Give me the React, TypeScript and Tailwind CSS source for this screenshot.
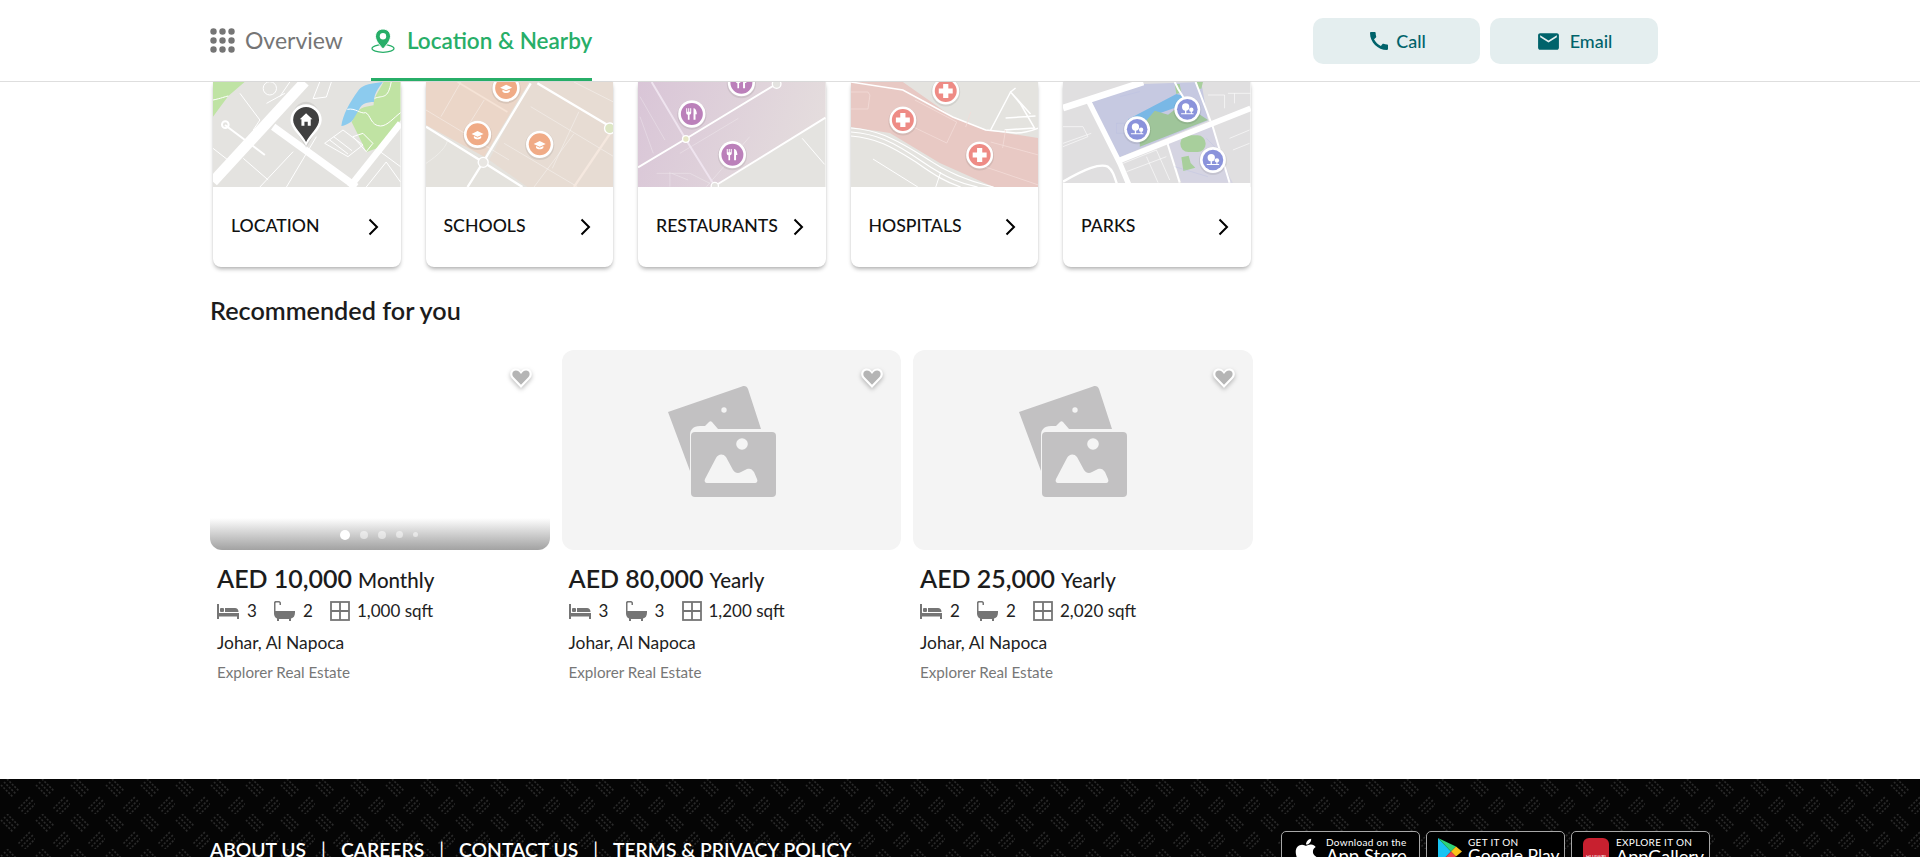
import { FaApple } from "react-icons/fa"

const phonePath = "M20.01 15.38c-1.23 0-2.42-.2-3.53-.56-.35-.12-.74-.03-1.01.24l-1.57 1.97c-2.83-1.35-5.48-3.9-6.89-6.83l1.95-1.66c.27-.28.35-.67.24-1.02-.37-1.11-.56-2.3-.56-3.53 0-.54-.45-.99-.99-.99H4.19C3.65 3 3 3.24 3 3.99 3 13.28 10.73 21 20.01 21c.71 0 .99-.63.99-1.18v-3.45c0-.54-.45-.99-.99-.99z"
const mailPath = "M20 4H4c-1.1 0-1.99.9-1.99 2L2 18c0 1.1.9 2 2 2h16c1.1 0 2-.9 2-2V6c0-1.1-.9-2-2-2zm0 4l-8 5-8-5V6l8 5 8-5v2z"

function GridIcon() {
    const spots = [3.5, 12.5, 21.5]
    return (
        <svg width="25" height="25" viewBox="0 0 25 25" fill="#757575">
            {spots.map((y) => spots.map((x) => <circle key={`${x}-${y}`} cx={x} cy={y} r="3.2" />))}
        </svg>
    )
}

function PinIcon() {
    return (
        <svg width="24" height="25" viewBox="0 0 24 25" fill="none">
            <ellipse cx="12" cy="20.5" rx="11" ry="3.8" stroke="#27ae68" strokeWidth="1.2" />
            <path d="M12 1C7.6 1 4.5 4.2 4.5 8.4 4.5 13 9.5 18 12 21c2.5-3 7.5-8 7.5-12.6C19.5 4.2 16.4 1 12 1z" fill="#27ae68" stroke="#fff" strokeWidth="1" />
            <circle cx="12" cy="8.2" r="3.2" fill="#fff" />
        </svg>
    )
}

function Chevron() {
    return (
        <svg width="11" height="18" viewBox="0 0 11 18" fill="none" className="shrink-0">
            <path d="M1.5 1.5 9 9l-7.5 7.5" stroke="#000" strokeWidth="2" />
        </svg>
    )
}

function CapGlyph({ x, y }: { x: number; y: number }) {
    return (
        <g transform={`translate(${x} ${y})`} fill="#fff">
            <path d="M0-12 18-3 0 5-18-3z" />
            <path d="M-11 3 0 8 11 3v6C6 14-6 14-11 9z" />
        </g>
    )
}

function PinDisc({ x, y, r, fill, children }: { x: number; y: number; r: number; fill: string; children?: React.ReactNode }) {
    return (
        <g>
            <circle cx={x} cy={y + 3} r={r + 3} fill="#000" opacity="0.08" />
            <circle cx={x} cy={y} r={r} fill="#fff" />
            <circle cx={x} cy={y} r={r - 8} fill={fill} />
            {children}
        </g>
    )
}

function LocationMap() {
    return (
        <svg viewBox="9 6 564 315" className="block w-full h-full" preserveAspectRatio="none">
            <rect x="9" y="6" width="564" height="315" fill="#e4e3e0" />
            <path d="M9 6h95L55 48 9 110z" fill="#bfe3a4" />
            <path d="M9 60c25-5 35-10 46-12" stroke="#fff" strokeWidth="3" fill="none" />
            <path d="M395 138c5-35 25-70 50-105 10-15 25-22 75-27-15 20-30 40-25 60-25 0-45 5-50 35-15 25-35 35-50 37z" fill="#8ccbee" />
            <path d="M522 6h51v115l-60 80-42 15-45-90 18-30c10-15 25-15 48-20 0-25 15-40 30-70z" fill="#c0e3a3" />
            <path d="M413 88c25-5 40 15 55 10 15 5 15 40 45 40 20 0 40-25 60-40M495 55c25-10 40 5 50-49" stroke="#fff" strokeWidth="3" fill="none" />
            <g stroke="#fff" fill="none" strokeLinecap="butt">
                <path d="M9 305 285 6" strokeWidth="32" />
                <path d="M190 140 440 321" strokeWidth="22" />
                <path d="M573 130 420 321" strokeWidth="20" />
                <path d="M45 135 165 225" strokeWidth="6" />
                <path d="M100 235 175 300M150 321 250 215M230 321 320 170M90 40 150 120 130 150M9 205l45 35M470 321l60-75 43 60M505 210l68 50" strokeWidth="3" />
                <circle cx="46" cy="134" r="10" strokeWidth="6" />
                <circle cx="180" cy="25" r="20" strokeWidth="3" />
                <path d="M170 70 225 40M240 6 210 50M330 6l-20 50 40-5 15-45" strokeWidth="3" />
                <path d="M345 190 400 150 460 195 415 230zM372 170l55 42M360 180l55 42" strokeWidth="3" />
                <path d="M430 170l30-10 30 30-20 25z" strokeWidth="3" />
            </g>
            <path d="M289 204 260 155c-30-40-5-90 29-90s59 50 29 90z" fill="#000" opacity="0.08" />
            <path d="M289 198c-10-25-47-50-47-78a47 47 0 0 1 94 0c0 28-37 53-47 78z" fill="#fff" />
            <path d="M289 186c-10-22-39-44-39-66a39 39 0 0 1 78 0c0 22-29 44-39 66z" fill="#404040" />
            <path d="M289 100 270 118h5v19h9v-12h10v12h9v-19h5z" fill="#fff" />
        </svg>
    )
}

function SchoolsMap() {
    return (
        <svg viewBox="705 246 564 315" className="block w-full h-full" preserveAspectRatio="none">
            <rect x="705" y="246" width="564" height="315" fill="#e4e2dd" />
            <path d="M705 246h310L880 470 705 375z" fill="#ebd6c8" />
            <path d="M1015 246h254v315H1010L895 480z" fill="#e7dcd3" />
            <g stroke="#fff" fill="none">
                <path d="M1020 250 878 485M878 485 830 561M705 380l170 105 120 76M1040 250l220 130" strokeWidth="7" />
                <path d="M705 330l250 150M810 246 750 350M880 300l-50 80M1020 320l250 150M1165 335l-80 170M1030 561l120-160M940 430l220 130M770 420c-5 30-50 60-65 70M1150 246l119 60" strokeWidth="1.5" opacity="0.75" />
                <path d="M1269 385 1150 561" stroke="#f5e8df" strokeWidth="7" />
                <path d="M800 246l150 90" stroke="#f5e3d6" strokeWidth="5" />
            </g>
            <circle cx="877" cy="487" r="15" fill="#e8e6e2" stroke="#fff" strokeWidth="4" />
            <circle cx="1258" cy="385" r="16" fill="#dde6c4" stroke="#fff" strokeWidth="4" />
            <PinDisc x={860} y={403} r={41} fill="#f0ab86"><CapGlyph x={860} y={405} /></PinDisc>
            <PinDisc x={1047} y={433} r={41} fill="#f0ab86"><CapGlyph x={1047} y={435} /></PinDisc>
            <PinDisc x={946} y={264} r={41} fill="#f0ab86"><CapGlyph x={946} y={266} /></PinDisc>
        </svg>
    )
}

function Cutlery({ x, y }: { x: number; y: number }) {
    return (
        <g transform={`translate(${x} ${y})`} fill="#fff">
            <path d="M-17-16h3v10h3v-10h3v10h3v-10h3v13c0 4-3 5-5 6v15h-5V3c-3-1-5-2-5-6z" />
            <path d="M5-16c6 0 10 8 10 18H11v16H5z" />
        </g>
    )
}

function RestaurantsMap() {
    return (
        <svg viewBox="-6 6 564 315" className="block w-full h-full" preserveAspectRatio="none">
            <defs>
                <linearGradient id="restTint" x1="0" y1="0" x2="1" y2="0.2">
                    <stop offset="0" stopColor="#d9c5d7" />
                    <stop offset="1" stopColor="#e4dcdd" />
                </linearGradient>
            </defs>
            <rect x="-6" y="6" width="564" height="315" fill="#e4e3e0" />
            <path d="M-6 6h564v109L225 321H-6z" fill="url(#restTint)" />
            <g stroke="#fff" fill="none">
                <path d="M-6 262 137 177 410 12" strokeWidth="6" />
                <path d="M225 318 558 113" strokeWidth="6" />
                <path d="M488 175l67 78" strokeWidth="3" />
                <path d="M120 220l176-105M200 320l130-150M0 50l75 130M0 110l40 110M50 280h100l60 30M90 320v-45M145 300l-50-20" strokeWidth="1.5" opacity="0.55" />
            </g>
            <path d="M35 6 137 177 225 318" stroke="#efe4ef" strokeWidth="6" fill="none" />
            <circle cx="138" cy="177" r="10" fill="#e6e6c6" stroke="#fff" strokeWidth="4" />
            <circle cx="225" cy="318" r="11" fill="#e4e3e0" stroke="#fff" strokeWidth="4" />
            <circle cx="411" cy="12" r="13" fill="#e4e3e0" stroke="#fff" strokeWidth="4" />
            <PinDisc x={156} y={102} r={41} fill="#bb80ba"><Cutlery x={156} y={101} /></PinDisc>
            <PinDisc x={278} y={224} r={41} fill="#bb80ba"><Cutlery x={278} y={223} /></PinDisc>
            <PinDisc x={305} y={8} r={41} fill="#bb80ba"><Cutlery x={305} y={7} /></PinDisc>
        </svg>
    )
}

function HospitalPin({ x, y }: { x: number; y: number }) {
    return (
        <g transform={`translate(${x} ${y})`}>
            <circle cy="1" r="14.5" fill="#000" opacity="0.08" />
            <circle r="13.5" fill="#fff" />
            <circle r="11" fill="#ee8b85" />
            <path d="M-2.6-7h5.2v4.4H7v5.2H2.600V7h-5.2V2.600H-7v-5.2h4.400z" fill="#fff" />
        </g>
    )
}

function HospitalsMap() {
    return (
        <svg viewBox="0 0 188 105" className="block w-full h-full" preserveAspectRatio="none">
            <rect width="188" height="105" fill="#e4e3df" />
            <path d="M0 0h52l50 35 33 13 53 8v49h-45L89 81 39 51 0 45z" fill="#e8c9c4" />
            <g stroke="#fff" fill="none">
                <path d="M0 0 52 8l50 27 33 13 30 3c10 0 18-3 23-5" strokeWidth="1.500" />
                <path d="M0 46c25 2 40 8 75 30 25 17 50 25 68 29M0 50c25 2 40 8 72 30 25 17 40 22 55 25M0 54c25 2 40 10 65 26 20 14 30 20 45 25" strokeWidth="1.200" />
                <path d="M140 48l20-38 10 12 14 24-30 2M155 36l30-2M165 6l-5 4 20 22" strokeWidth="1.500" />
                <path d="M22 77l45 28M85 105l5-15" strokeWidth="1" />
            </g>
            <g stroke="#f3dcd8" fill="none" strokeWidth="0.8">
                <path d="M0 10h17l2 3-2 14H0M52 40l44 21 10-21-42-22M120 30l-5 15M140 60l48 13M155 48l-3 18M135 85l53 18" />
            </g>
            <HospitalPin x={52} y={38} />
            <HospitalPin x={95} y={9} />
            <HospitalPin x={129} y={73} />
        </svg>
    )
}

function Trees({ x, y }: { x: number; y: number }) {
    return (
        <g transform={`translate(${x} ${y})`} fill="#fff">
            <circle cx="-5" cy="-5" r="11" />
            <rect x="-7" y="3" width="4" height="13" />
            <circle cx="12" cy="3" r="6.500" />
            <rect x="10.500" y="6" width="3" height="10" />
            <rect x="-19" y="14" width="38" height="3" rx="1.500" />
        </g>
    )
}

function ParksMap() {
    return (
        <svg viewBox="9 6 564 315" className="block w-full h-full" preserveAspectRatio="none">
            <rect x="9" y="6" width="564" height="315" fill="#e0dfe0" />
            <path d="M95 65 250 12 425 6 445 122 172 235z" fill="#c6c9e1" />
            <path d="M325 185 455 130 510 290 520 308H365z" fill="#d5d4e2" />
            <path d="M205 118 350 42l18 5-5 30-70 25-60 70z" fill="#79b8e6" />
            <path d="M240 145 285 92l40 12 45-34 75 50-205 80z" fill="#9fc59a" />
            <rect x="362" y="166" width="76" height="50" rx="24" fill="#a8cf9c" />
            <path d="M365 232l22-5 6 22 14 14-36 10z" fill="#a8cf9c" />
            <path d="M345 12h15l5 25-15 5zM408 6h22l-5 20h-10z" fill="#a8cf9c" />
            <g stroke="#fff" fill="none">
                <path d="M9 84 250 6" strokeWidth="20" />
                <path d="M85 62 180 250 210 321" strokeWidth="16" />
                <path d="M170 245 573 85" strokeWidth="17" />
                <path d="M9 305c70-40 110-55 135-45 15 10 20 30 30 61" strokeWidth="7" />
                <path d="M345 6l10 20 50 80M408 6l45 118M320 180l40 128M455 125l55 183" strokeWidth="6" />
                <path d="M9 140h60l15 30-75 30M9 190l85-30M190 250l100-40 40 90M260 230l35 78M200 275l120-45M510 175l60-25M520 210l50-20M505 40h68M525 40v30M445 45h50v40" strokeWidth="2" opacity="0.9" />
            </g>
            <g stroke="#b8bde2" fill="none" strokeWidth="1.500" opacity="0.7">
                <path d="M170 130h25v30h-25zM180 50l60-15M440 175l30 30M345 260l100 30" />
            </g>
            <rect x="9" y="309" width="564" height="12" fill="#fff" />
            <PinDisc x={383} y={88} r={39} fill="#8a93db"><Trees x={383} y={86} /></PinDisc>
            <PinDisc x={232} y={148} r={39} fill="#8a93db"><Trees x={232} y={146} /></PinDisc>
            <PinDisc x={460} y={240} r={39} fill="#8a93db"><Trees x={460} y={238} /></PinDisc>
        </svg>
    )
}

const nearby = [
    { label: "LOCATION", map: <LocationMap /> },
    { label: "SCHOOLS", map: <SchoolsMap /> },
    { label: "RESTAURANTS", map: <RestaurantsMap /> },
    { label: "HOSPITALS", map: <HospitalsMap /> },
    { label: "PARKS", map: <ParksMap /> },
]

function BedIcon() {
    return (
        <svg width="22" height="15" viewBox="0 0 22 15" fill="#757575">
            <path d="M0 0h2v9h20v6h-2v-2.500H2V15H0z" />
            <rect x="3" y="4" width="4" height="4" rx="1" />
            <path d="M8 4h10c2 0 3.500 1.500 3.500 4H8z" />
        </svg>
    )
}

function BathIcon() {
    return (
        <svg width="22" height="20" viewBox="0 0 22 20" fill="#757575">
            <path d="M1 1.500C1 .5 2 0 3 0h3c1 0 2 1 2 2v2H6.500V2.200c0-.4-.3-.7-.7-.7H3.200c-.4 0-.7.3-.7.7V10H22v1.500c0 3.500-1.500 5.500-4 6V20h-2v-2H6v2H4v-2.500c-2-.8-3-3-3-5z" />
        </svg>
    )
}

function AreaIcon() {
    return (
        <svg width="20" height="20" viewBox="0 0 20 20" fill="none" stroke="#757575" strokeWidth="1.800">
            <rect x="1" y="1" width="18" height="18" />
            <path d="M10 1v18M1 10h18" />
        </svg>
    )
}

function HeartButton() {
    return (
        <svg width="24" height="24" viewBox="0 0 24 24" className="absolute right-[17px] top-[16px] drop-shadow-[0_2px_2px_rgba(0,0,0,0.25)]">
            <path d="M12 22 2.800 12.200C-.5 8.500 1.500 2.500 6.500 2.500c2.500 0 4.300 1.300 5.500 3 1.200-1.700 3-3 5.500-3 5 0 7 6 3.700 9.700z" fill="#fff" />
            <path d="M12 18.800 4.500 11C2.300 8.400 3.500 4.500 6.800 4.500c2.400 0 4 1.600 5.200 3.500 1.200-1.900 2.800-3.500 5.200-3.500 3.300 0 4.500 3.900 2.300 6.500z" fill="#b5b5b5" />
        </svg>
    )
}

function NoImage() {
    return (
        <svg width="131" height="128" viewBox="0 0 131 128" className="ml-[4px]">
            <path d="M0 26 74 .5c3-1 5 0 6 2.500l13 40H50l-6-7c-1-1-2-1-3 0l-4 4h-5c-7 0-10 4-10 9v36z" fill="#c2c1c2" />
            <circle cx="56" cy="24" r="2.700" fill="#f4f4f4" />
            <rect x="23" y="46" width="85" height="65" rx="4" fill="#c2c1c2" />
            <path d="M39 97c-2 0-3-2-2-4l11-21c2-4 7-5 10-1l7 13c2 3 5 4 8 2l6-3c3-1 5 0 7 3l3 7c1 2 0 4-2 4z" fill="#f4f4f4" />
            <circle cx="74" cy="58" r="5.800" fill="#f4f4f4" />
        </svg>
    )
}

const listings = [
    { price: "AED 10,000", period: "Monthly", beds: 3, baths: 2, area: "1,000 sqft", loaded: true },
    { price: "AED 80,000", period: "Yearly", beds: 3, baths: 3, area: "1,200 sqft", loaded: false },
    { price: "AED 25,000", period: "Yearly", beds: 2, baths: 2, area: "2,020 sqft", loaded: false },
]

function ListingCard({ listing }: { listing: (typeof listings)[number] }) {
    return (
        <div className="w-[339.5px]">
            <div className={`relative h-[200px] overflow-hidden rounded-xl flex items-center justify-center ${listing.loaded ? "bg-white" : "bg-[#f4f4f4]"}`}>
                {!listing.loaded && <NoImage />}
                {listing.loaded && (
                    <div className="absolute inset-x-0 bottom-0 h-[32px] bg-gradient-to-b from-white to-[#a2a2a2] flex items-center justify-center gap-[10px] pt-[1px] pr-[2px]">
                        <span className="w-[10px] h-[10px] rounded-full bg-white" />
                        <span className="w-[8px] h-[8px] rounded-full bg-white/50" />
                        <span className="w-[8px] h-[8px] rounded-full bg-white/50" />
                        <span className="w-[7px] h-[7px] rounded-full bg-white/50" />
                        <span className="w-[5px] h-[5px] rounded-full bg-white/50" />
                    </div>
                )}
                <HeartButton />
            </div>
            <div className="pl-[7px] pt-[12px]">
                <div className="flex items-baseline gap-[6px] leading-[32px] text-[#1c1c1c]">
                    <span className="text-[25px] font-semibold">{listing.price}</span>
                    <span className="text-[20.5px] font-medium">{listing.period}</span>
                </div>
                <div className="flex items-center h-[24px] mt-[3px] text-[17px] text-[#222]">
                    <BedIcon />
                    <span className="ml-[8px] w-[26px]">{listing.beds}</span>
                    <BathIcon />
                    <span className="ml-[8px] w-[27px]">{listing.baths}</span>
                    <AreaIcon />
                    <span className="ml-[7px]">{listing.area}</span>
                </div>
                <div className="mt-[8px] text-[17.4px] leading-[24px] text-[#222]">Johar, Al Napoca</div>
                <div className="mt-[7px] text-[15.2px] leading-[20px] text-[#777]">Explorer Real Estate</div>
            </div>
        </div>
    )
}

function StoreBadge({ icon, slot, small, big, bigSize }: { icon: React.ReactNode; slot: string; small: string; big: string; bigSize: string }) {
    return (
        <div className="w-[139px] h-[50px] shrink-0 rounded-[5px] border border-[#a6a6a6] bg-black flex items-start pl-[10px] pt-[4px] gap-[6px] text-white">
            <div className={`${slot} h-[30px] flex items-center justify-center shrink-0`}>{icon}</div>
            <div>
                <div className="text-[10px] leading-[12px] tracking-[0.3px] whitespace-nowrap">{small}</div>
                <div className={`${bigSize} -mt-[2px] leading-[20px] whitespace-nowrap`}>{big}</div>
            </div>
        </div>
    )
}

export default function App() {
    return (
        <div className="h-[857px] overflow-hidden bg-white flex flex-col font-[Lato,sans-serif]">
            <header className="h-[82px] shrink-0 border-b border-[#dedede] pl-[210px]">
                <div className="w-[1448px] h-full flex items-start justify-between">
                    <nav className="flex h-full">
                        <div className="flex items-center gap-[10px] h-full text-[23px] text-[#757575]">
                            <GridIcon />
                            Overview
                        </div>
                        <div className="ml-[28px] h-[81px] flex items-center gap-[12px] border-b-[3px] border-[#27ae68] pt-[3px] text-[22.500px] font-semibold text-[#27ae68]">
                            <PinIcon />
                            Location &amp; Nearby
                        </div>
                    </nav>
                    <div className="flex gap-[10px] pt-[18px]">
                        <button className="w-[167px] h-[46px] rounded-[10px] bg-[#e4eeef] flex items-center justify-center gap-[5px] text-[18px] font-medium text-[#00636b]">
                            <svg width="24" height="24" viewBox="0 0 24 24" fill="#00636b"><path d={phonePath} /></svg>
                            Call
                        </button>
                        <button className="w-[168px] h-[46px] rounded-[10px] bg-[#e4eeef] flex items-center justify-center gap-[9px] text-[18px] font-medium text-[#00636b]">
                            <svg width="25" height="25" viewBox="0 0 24 24" fill="#00636b"><path d={mailPath} /></svg>
                            Email
                        </button>
                    </div>
                </div>
            </header>

            <main className="flex-1 pl-[210px]">
                <div className="ml-[3px] flex gap-[25px]">
                    {nearby.map((item) => (
                        <div key={item.label} className="w-[187.500px] h-[185px] rounded-b-lg bg-white shadow-[0_3px_4px_-1px_rgba(0,0,0,0.3),0_0_2px_rgba(0,0,0,0.08)] overflow-hidden">
                            <div className="h-[105px]">{item.map}</div>
                            <div className="h-[79px] pl-[18px] pr-[22px] flex items-center justify-between text-[17.700px] font-medium text-[#111]">
                                {item.label}
                                <Chevron />
                            </div>
                        </div>
                    ))}
                </div>

                <h2 className="mt-[28px] text-[25.200px] leading-[30px] font-semibold text-[#1c1c1c]">Recommended for you</h2>

                <div className="mt-[25px] flex gap-[12px]">
                    {listings.map((listing) => (
                        <ListingCard key={listing.price} listing={listing} />
                    ))}
                </div>
            </main>

            <footer className="relative h-[78px] shrink-0 bg-[#050505] overflow-hidden">
                <svg className="absolute inset-0 w-full h-full" aria-hidden="true">
                    <defs>
                        <pattern id="weave" width="35" height="35" patternUnits="userSpaceOnUse">
                            <path d="M4 3l12 12M7 0l12 12M1 6l12 12M21.500 32.500l12-12M18.500 29.500l12-12M24.500 35.500l12-12" stroke="#2a2a2a" strokeWidth="1.600" strokeDasharray="2 1.500" fill="none" />
                        </pattern>
                    </defs>
                    <rect width="100%" height="100%" fill="url(#weave)" />
                </svg>
                <div className="relative flex items-start justify-between pl-[210px] w-[1710px] pt-[52px]">
                    <div className="flex items-center gap-[15px] pt-[7px] text-[19.300px] leading-[24px] font-semibold text-white whitespace-nowrap">
                        <span>ABOUT US</span>
                        <span className="font-normal">|</span>
                        <span>CAREERS</span>
                        <span className="font-normal">|</span>
                        <span>CONTACT US</span>
                        <span className="font-normal">|</span>
                        <span>TERMS &amp; PRIVACY POLICY</span>
                    </div>
                    <div className="flex gap-[6px]">
                        <StoreBadge slot="w-[28px]" bigSize="text-[18.500px]" icon={<FaApple size={28} />} small="Download on the" big="App Store" />
                        <StoreBadge
                            slot="w-[25px]"
                            bigSize="text-[17.500px]"
                            icon={
                                <svg width="24" height="27" viewBox="0 0 24 27">
                                    <path d="M0 0v27l13-13.500z" fill="#19c3f2" />
                                    <path d="M0 0l13 13.500 5-5z" fill="#2ed47a" />
                                    <path d="M0 27l13-13.500 5 5z" fill="#ef4550" />
                                    <path d="M18 8.500l6 5-6 5-5-5z" fill="#fcc419" />
                                </svg>
                            }
                            small="GET IT ON"
                            big="Google Play"
                        />
                        <StoreBadge
                            slot="w-[28px]"
                            bigSize="text-[18px]"
                            icon={
                                <div className="w-[26px] h-[26px] rounded-[6px] bg-[#c8202f] flex items-end justify-center pb-[4px] text-[5px] leading-none text-white">HUAWEI</div>
                            }
                            small="EXPLORE IT ON"
                            big="AppGallery"
                        />
                    </div>
                </div>
            </footer>
        </div>
    )
}
